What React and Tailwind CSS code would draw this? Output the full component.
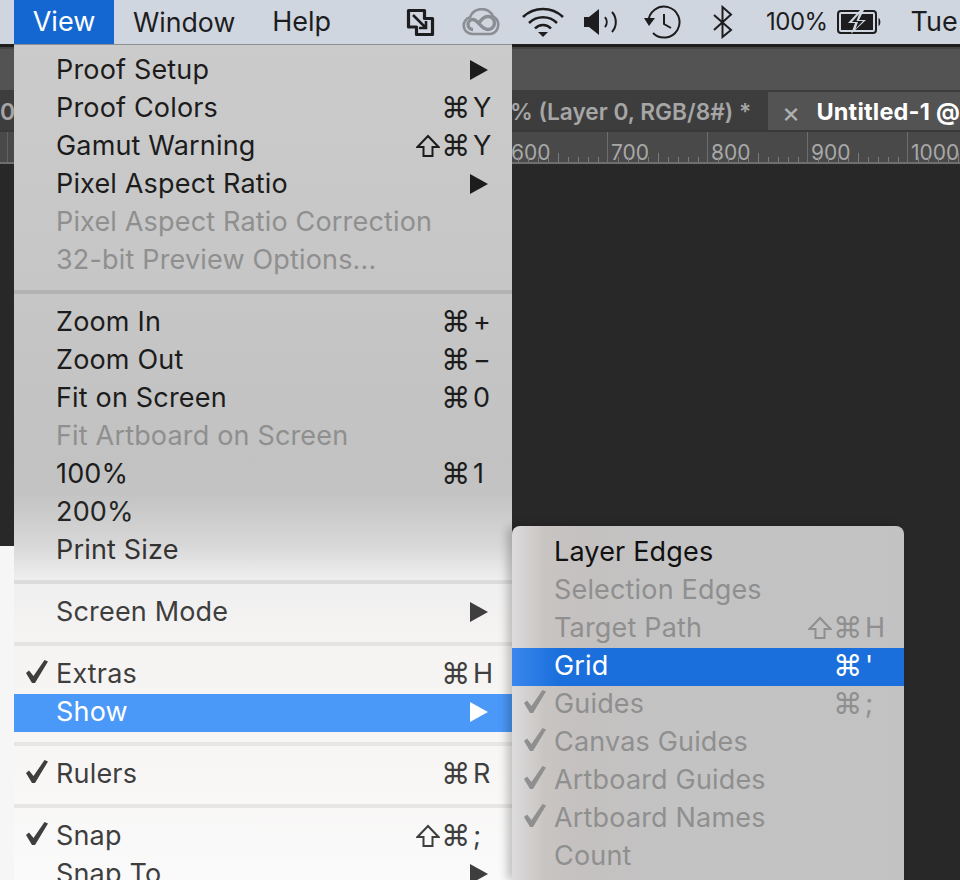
const FONT = "font-['Inter','Liberation_Sans',sans-serif]";

function Tri({ color }) {
  return (
    <svg width="18" height="20" viewBox="0 0 18 20" className="block">
      <polygon points="0,0 18,10 0,20" fill={color} />
    </svg>
  );
}

function Check({ color }) {
  return (
    <svg width="22" height="23" viewBox="0 0 22 23" className="absolute left-[-30px] top-[6px]">
      <polygon points="0,13 3,10.500 7.500,16 18.500,0 22,1.500 9,23 6,23" fill={color} />
    </svg>
  );
}

function ShiftKey({ color }) {
  return (
    <svg width="24" height="24" viewBox="0 0 24 24" className="block">
      <path d="M12 2 L22.500 13 H16.500 V22 H7.500 V13 H1.500 Z" fill="none" stroke={color} strokeWidth="2" strokeLinejoin="miter" />
    </svg>
  );
}

function Keys({ shift, cmd, k, arrow, color }) {
  return (
    <div className="w-[96px] shrink-0 flex items-center" style={{ color }}>
      <span className="w-[27px]">{shift ? <ShiftKey color={color} /> : null}</span>
      <span className="w-[30px] ml-[-2px] mr-[2px] text-[29px] leading-none font-['DejaVu_Sans',sans-serif]">{cmd ? "⌘" : ""}</span>
      {k ? <span>{k}</span> : null}
      {arrow ? <span className="ml-[-3px]"><Tri color={color} /></span> : null}
    </div>
  );
}

function Row({ label, color, shift, cmd, k, arrow, check, checkColor, bg, keyColor }) {
  return (
    <div className="h-[38px] flex items-center pl-[42px] pb-[2px]" style={{ color, background: bg }}>
      <div className="relative flex-1 whitespace-nowrap">
        {check ? <Check color={checkColor || color} /> : null}
        {label}
      </div>
      <Keys shift={shift} cmd={cmd} k={k} arrow={arrow} color={keyColor || color} />
    </div>
  );
}

function Sep({ top }) {
  return (
    <div className="py-[10px]">
      <div className="h-[4px]" style={{ background: top }} />
    </div>
  );
}

const INK = "#1c1c1c";
const DIS = "#8f8f8f";
const TICKS = [10, 20, 30, 40, 50, 60, 70, 80, 90];

function Ruler() {
  const marks = ["600", "700", "800", "900", "1000"];
  return (
    <div className="h-[34px] bg-[#494949] border-t-2 border-t-[#393939] border-b-2 border-b-[#6e6e6e] flex overflow-hidden">
      <div className="w-[507px] shrink-0 pl-[7px]">
        <div className="w-px h-full bg-[#626262]" />
      </div>
      {marks.map((m) => (
        <div key={m} className="relative w-[100px] shrink-0 border-l border-[#6e6e6e] pl-[3px] pt-[8px] text-[21px] leading-[26px] text-[#a8a8a8]">
          {m}
          <svg width="100" height="9" className="absolute left-0 bottom-0">
            {TICKS.map((x) => (
              <rect key={x} x={x} y={x === 50 ? 0 : 4} width="1" height={x === 50 ? 9 : 5} fill="#7a7a7a" />
            ))}
          </svg>
        </div>
      ))}
    </div>
  );
}

function TrayIcons() {
  const c = "#1d1d1f";
  return (
    <div className="flex items-center">
      <svg width="30" height="30" viewBox="0 0 30 30" className="ml-[405px]">
        <path d="M3.500 3.500 H19.500 V11.500 H27.500 V27.500 H11.500 V20 H3.500 Z" fill="none" stroke={c} strokeWidth="3.200" strokeLinejoin="round" />
        <path d="M8 8 L21 21 M21 14 V21 H14" fill="none" stroke={c} strokeWidth="2.600" />
      </svg>
      <svg width="38" height="28" viewBox="0 0 38 28" className="ml-[27px]">
        <path d="M10 26 a8.500 8.500 0 0 1 -2-16.700 a12.500 12.500 0 0 1 23-1 a9.500 9.500 0 0 1 -2 17.700 z" fill="none" stroke="#8b8f95" strokeWidth="2.600" />
        <path d="M11 21.500 a5 5 0 0 1 0-10 c5 0 8 10 15 10 a6 6 0 0 0 0-13 c-5 0-7 4-9 6" fill="none" stroke="#8b8f95" strokeWidth="3.400" />
      </svg>
      <svg width="42" height="30" viewBox="0 0 42 30" className="ml-[22px]">
        <path d="M1 10 a29 29 0 0 1 40 0 M7 16 a20 20 0 0 1 28 0 M13 21.500 a11 11 0 0 1 16 0" fill="none" stroke={c} strokeWidth="2.500" />
        <polygon points="16,25 26,25 21,30" fill={c} />
      </svg>
      <svg width="36" height="26" viewBox="0 0 36 26" className="ml-[20px]">
        <path d="M0 8 h5 l10-8 v26 l-10-8 H0 z" fill={c} />
        <path d="M21 8 a8 8 0 0 1 0 10 M28 3 a15 15 0 0 1 0 20" fill="none" stroke={c} strokeWidth="2" />
      </svg>
      <svg width="38" height="34" viewBox="0 0 38 34" className="ml-[24px]">
        <path d="M4.500 17 a15.500 15.500 0 1 1 4.500 11" fill="none" stroke={c} strokeWidth="2" />
        <polygon points="0,13 11,13 5,21" fill={c} />
        <path d="M20 9 V19 L27 23" fill="none" stroke={c} strokeWidth="2" />
      </svg>
      <svg width="22" height="34" viewBox="0 0 22 34" className="ml-[30px]">
        <path d="M2 10 L19 25 L10.500 32 V2 L19 9.500 L2 25" fill="none" stroke={c} strokeWidth="2" />
      </svg>
      <span className="ml-[32px] text-[24px] text-[#1d1d1f] tracking-[-0.5px]">100%</span>
      <svg width="46" height="24" viewBox="0 0 46 24" className="ml-[9px]">
        <rect x="1" y="1" width="38" height="22" rx="3" fill="none" stroke={c} strokeWidth="2" />
        <rect x="4" y="4" width="32" height="16" fill={c} />
        <path d="M23 0 L11 13 H18 L14 24 L29 10 H22 L27 0 Z" fill="#d0d6df" />
        <path d="M22 4 L15 12 H21 L18.500 19 L26 11 H19.500 Z" fill={c} />
        <path d="M41.500 8 c2.500 1 2.500 7 0 8 z" fill={c} />
      </svg>
      <span className="ml-[28px] text-[27px] text-[#1d1d1f]">Tue</span>
    </div>
  );
}

export default function App() {
  return (
    <div className={`relative w-[960px] h-[880px] overflow-hidden bg-[#282828] ${FONT}`}>
      {/* menu bar */}
      <div className="relative h-[44px] bg-[#d0d6df] flex items-center whitespace-nowrap text-[#1d1d1f] text-[27px]">
        <div className="absolute left-0 top-0 h-[44px] flex items-center">
          <div className="ml-[14px] w-[100px] h-[44px] bg-[#1467d0] text-white flex items-center justify-center">View</div>
          <div className="ml-[19px] text-[26.7px]">Window</div>
          <div className="ml-[37px]">Help</div>
        </div>
        <TrayIcons />
      </div>

      {/* app chrome */}
      <div className="h-[3px] bg-[#1f1f1f]" />
      <div className="h-[43px] bg-[#535353] border-t-2 border-[#444]" />
      <div className="h-[40px] bg-[#3d3d3d] flex pt-[2px] whitespace-nowrap">
        <div className="w-[14px] overflow-hidden text-[23px] font-semibold leading-[40px] text-[#a6a6a6]">00</div>
        <div className="w-[754px] pl-[496px] text-[22.7px] font-semibold leading-[40px] text-[#a6a6a6] overflow-hidden">% (Layer 0, RGB/8#) *</div>
        <div className="flex-1 bg-[#535353] flex items-center pt-px">
          <span className="ml-[14px] text-[#b0b0b0] text-[28px] leading-none">×</span>
          <span className="ml-[16px] text-[23.5px] tracking-[0.2px] font-bold text-white">Untitled-1 @</span>
        </div>
      </div>
      <Ruler />

      {/* canvas + left strip */}
      <div className="h-[716px] flex">
        <div className="w-[14px] flex flex-col">
          <div className="h-[382px] bg-[#282828]" />
          <div className="flex-1 bg-[#f6f6f6]" />
        </div>
        <div className="flex-1 bg-[#282828]" />
      </div>

      {/* View menu */}
      <div className="absolute left-[14px] top-[44px] w-[498px] h-[836px] pt-[7px] text-[27px] tracking-[0.17px] border-t border-[#8b9097] bg-[linear-gradient(180deg,#cbcbcb_0%,#c6c6c6_30%,#c2c2c2_50%,#c4c4c4_54%,#d8d8d8_60%,#efefef_64%,#f6f4f3_72%,#f8f6f5_85%,#fafafa_100%)]">
        <Row label="Proof Setup" color={INK} arrow />
        <Row label="Proof Colors" color={INK} cmd k="Y" />
        <Row label="Gamut Warning" color={INK} shift cmd k="Y" />
        <Row label="Pixel Aspect Ratio" color={INK} arrow />
        <Row label="Pixel Aspect Ratio Correction" color={DIS} />
        <Row label="32-bit Preview Options..." color={DIS} />
        <Sep top="#b3b3b3" />
        <Row label="Zoom In" color={INK} cmd k="+" />
        <Row label="Zoom Out" color={INK} cmd k="−" />
        <Row label="Fit on Screen" color={INK} cmd k="0" />
        <Row label="Fit Artboard on Screen" color={DIS} />
        <Row label="100%" color={INK} cmd k="1" />
        <Row label="200%" color="#242424" />
        <Row label="Print Size" color="#333333" />
        <Sep top="#dcdcdc" />
        <Row label="Screen Mode" color="#3e3e3e" arrow />
        <Sep top="#e6e4e3" />
        <Row label="Extras" color="#3e3e3e" check cmd k="H" />
        <Row label="Show" color="#ffffff" arrow bg="#4a98f8" />
        <Sep top="#e8e5e4" />
        <Row label="Rulers" color="#3e3e3e" check cmd k="R" />
        <Sep top="#e8e6e5" />
        <Row label="Snap" color="#3e3e3e" check shift cmd k=";" />
        <Row label="Snap To" color="#3e3e3e" arrow />
      </div>

      {/* Show submenu */}
      <div className="absolute left-[512px] top-[526px] w-[392px] h-[354px] pt-2 rounded-t-lg text-[27px] tracking-[0.17px] shadow-[-5px_0_8px_rgba(0,0,0,0.22)] bg-[linear-gradient(90deg,#dcdcdc_0%,#c9c5c3_8%,#c4c1c0_16%,#c3c3c3_40%,#c2c2c2_100%)]">
        <Row label="Layer Edges" color="#111111" />
        <Row label="Selection Edges" color={DIS} />
        <Row label="Target Path" color={DIS} shift cmd k="H" />
        <Row label="Grid" color="#ffffff" cmd k="'" bg="linear-gradient(90deg,#3a87ee 0%,#1a6fdc 12%,#1a6fdc 100%)" />
        <Row label="Guides" color={DIS} check cmd k=";" />
        <Row label="Canvas Guides" color={DIS} check />
        <Row label="Artboard Guides" color={DIS} check />
        <Row label="Artboard Names" color={DIS} check />
        <Row label="Count" color={DIS} />
      </div>
    </div>
  );
}
